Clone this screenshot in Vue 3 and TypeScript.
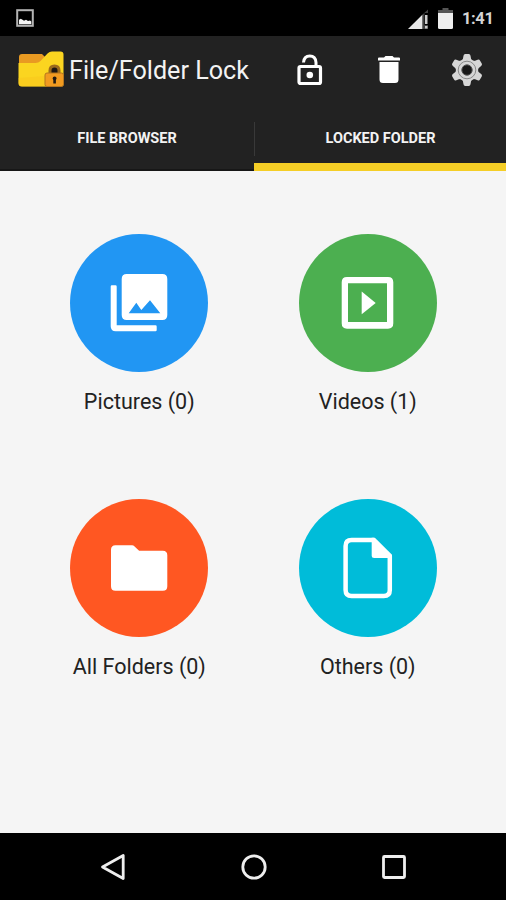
<script setup lang="ts">
interface Category {
  id: 'pictures' | 'videos' | 'folders' | 'others'
  label: string
  count: number
}

const categories: Category[] = [
  { id: 'pictures', label: 'Pictures', count: 0 },
  { id: 'videos', label: 'Videos', count: 1 },
  { id: 'folders', label: 'All Folders', count: 0 },
  { id: 'others', label: 'Others', count: 0 },
]
</script>

<template>
  <div class="screen">
    <div class="status">
      <svg class="shot" viewBox="0 0 18 18">
        <rect x="1.200" y="1.200" width="15.600" height="15.600" fill="none" stroke="#b4b4b4" stroke-width="2" />
        <path d="M3 15.200v-4.500l1.800-1 1.700 1 1.500 1 2-1 2 1.300 2-.5 1.300 1v2.700z" fill="#f4f4f4" />
      </svg>
      <svg class="signal" viewBox="0 0 22 20">
        <path d="M0 20L14.600 5.500V20z" fill="#e8e8e8" />
        <path d="M14.600 5.500L20 .5V4h-3.500v12H20v4h-5.400z" fill="#444" />
        <path d="M17 6h2.500v9H17zM17 17h2.500v2.500H17z" fill="#ccc" />
      </svg>
      <svg class="battery" viewBox="0 0 15 21">
        <path d="M4.500 0h6v2H15v4H0V2h4.500z" fill="#555" />
        <path d="M0 5h15v14.500q0 1.500-1.500 1.500h-12Q0 21 0 19.500z" fill="#eee" />
      </svg>
      <span class="clock">1:41</span>
    </div>

    <header>
      <div class="bar">
        <svg class="logo" viewBox="0 0 48 38">
          <path d="M2 6q0-3 3-3h20l5 5-5 8H2z" fill="#e99a22" />
          <path d="M1.500 12h17q3 0 5-2l7-7.500Q32.500.5 35 .5h8.500q3 0 3 3v28.500q0 3.500-3.500 3.500H5q-3.500 0-3.500-3.500z" fill="#fbd520" />
          <path d="M1.500 27v5q0 3.500 3.500 3.500h24V25z" fill="#f9c51c" opacity=".5" />
          <path d="M33 23v-3.500q0-4.500 4.500-4.500t4.500 4.500V23" fill="#1d1713" stroke="#9a6a1c" stroke-width="3" />
          <rect x="28" y="22" width="18.500" height="13.500" rx="2" fill="#f29b20" stroke="#b5761f" />
          <path d="M35.600 27.500q0-2 2-2t2 2l-.7 1.500v3.500h-2.600V29z" fill="#241b12" />
        </svg>
        <h1>File/Folder Lock</h1>
        <svg class="unlock" viewBox="0 0 26 32">
          <rect x="2" y="12.500" width="21.500" height="17" rx="1.500" fill="none" stroke="#fff" stroke-width="3.200" />
          <path d="M6.500 8.500Q7 2 12.800 2t6.200 6.500V12" fill="none" stroke="#fff" stroke-width="3" />
          <circle cx="12.800" cy="21" r="3.300" fill="#fff" />
        </svg>
        <svg class="trash" viewBox="0 0 22 28">
          <path d="M0 2.500Q0 1.500 1 1.500h5L7.500 0h7L16 1.500h5q1 0 1 1v2H0zM1.500 6h19v17.500q0 3.500-3.500 3.500H5q-3.500 0-3.500-3.500z" fill="#fff" />
        </svg>
        <svg class="gear" viewBox="-16 -17 32 34">
          <g fill="#d6d6d6">
            <circle r="11.200" />
            <path v-for="n in 6" :key="n" d="M-5.500-8.500Q-3.800-10.500-3.500-14.300-3.300-16-1.800-16h3.600Q3.300-16 3.500-14.300 3.800-10.500 5.500-8.500z" :transform="`rotate(${n * 60})`" />
          </g>
          <circle r="8.800" fill="none" stroke="#888" />
          <circle r="5.200" fill="#181818" stroke="#555" />
        </svg>
      </div>
      <nav class="tabs">
        <div class="tab"><span>FILE BROWSER</span></div>
        <div class="tab active"><span>LOCKED FOLDER</span></div>
      </nav>
    </header>

    <main>
      <div v-for="item in categories" :key="item.id" class="category">
        <svg class="disc" :class="item.id" viewBox="0 0 138 138">
          <template v-if="item.id === 'pictures'">
            <path fill-rule="evenodd" d="M56.700 40h35.600q5 0 5 5v36q0 5-5 5H56.700q-5 0-5-5V45q0-5 5-5zM58.700 79.300h31.600L80 66.300 71.300 76l-5-7.300z" />
            <path d="M40.700 52.500q0-1.200 1.200-1.200h3.600q1.200 0 1.200 1.200v38.800h38.800q1.200 0 1.200 1.200v3.600q0 1.200-1.200 1.200H45.700q-5 0-5-5z" />
          </template>
          <template v-else-if="item.id === 'videos'">
            <path fill-rule="evenodd" d="M48 43h41q5.300 0 5.300 5.300v41q0 5.400-5.300 5.400H48q-5.300 0-5.300-5.400v-41Q42.700 43 48 43zm1 6.300V88h39V49.300z" />
            <path d="M62.700 57.500L76.700 69l-14 11.200z" />
          </template>
          <path v-else-if="item.id === 'folders'" d="M45.500 46.300H62q1.500 0 2.600 1.200l4.500 4.200h23.700q4.500 0 4.500 4.500v31q0 4.500-4.500 4.500H45.500Q41 91.700 41 87.200V50.800q0-4.500 4.500-4.500z" />
          <template v-else>
            <path d="M75 40.900H52.600q-6 0-6 6v44.200q0 6 6 6h32.200q6 0 6-6V57" fill="none" stroke="#fff" stroke-width="4.500" />
            <path d="M72.700 38.700h3.200L93 55.800V59H75.200q-2.500 0-2.500-2.500z" />
          </template>
        </svg>
        <p>{{ item.label }} ({{ item.count }})</p>
      </div>
    </main>

    <footer>
      <svg viewBox="0 0 28 28"><path d="M3.500 14L24.200 2.500v23z" /></svg>
      <svg viewBox="0 0 28 28"><circle cx="14" cy="14" r="11.200" /></svg>
      <svg viewBox="0 0 28 28"><rect x="3.500" y="3.500" width="21" height="21" rx="1" /></svg>
    </footer>
  </div>
</template>

<style>
body {
  margin: 0;
}
</style>

<style scoped>
.screen {
  width: 506px;
  height: 900px;
  display: flex;
  flex-direction: column;
  overflow: hidden;
  background: #f5f5f5;
  font-family: Roboto, "Liberation Sans", sans-serif;
}
svg {
  display: block;
  flex: none;
}
.status {
  height: 36px;
  flex: none;
  box-sizing: border-box;
  display: flex;
  align-items: flex-start;
  padding: 8px 11px 0 16px;
  background: #000;
}
.shot {
  width: 18px;
  height: 18px;
  margin-top: 1px;
}
.signal {
  width: 22px;
  height: 20px;
  margin: 1px 8px 0 auto;
}
.battery {
  width: 15px;
  height: 21px;
  margin-right: 9px;
}
.clock {
  width: 33px;
  white-space: nowrap;
  font-size: 16.500px;
  line-height: 22px;
  font-weight: 700;
  letter-spacing: -0.4px;
  color: #d4d4d4;
}
header {
  height: 134.500px;
  flex: none;
  display: flex;
  flex-direction: column;
  background: #222;
  color: #f3f3f3;
}
.bar {
  height: 68px;
  display: flex;
  align-items: center;
  padding-left: 17px;
}
.logo {
  width: 48px;
  height: 38px;
}
h1 {
  width: 181px;
  margin: 2px 47px 0 4px;
  white-space: nowrap;
  font-size: 25.150px;
  line-height: 30px;
  font-weight: 400;
}
.unlock {
  width: 26px;
  height: 32px;
}
.trash {
  width: 22px;
  height: 28px;
  margin-left: 55px;
}
.gear {
  width: 32px;
  height: 34px;
  margin-left: 51px;
}
.tabs {
  height: 66.500px;
  display: flex;
}
.tab {
  width: 254px;
  box-sizing: border-box;
  padding-top: 17.500px;
  border-bottom: 2px solid #171717;
  text-align: center;
  font-size: 14.500px;
  line-height: 34px;
  font-weight: 700;
}
.tab.active {
  width: 252px;
  display: flex;
  justify-content: center;
  border-bottom: 8px solid #f5ce26;
}
.tab.active::before {
  content: "";
  width: 1px;
  height: 34px;
  margin-right: auto;
  background: #393939;
}
.tab.active span {
  margin-right: auto;
}
main {
  height: 662.500px;
  flex: none;
  box-sizing: border-box;
  display: grid;
  grid-template-columns: 228.500px 228.500px;
  grid-template-rows: 265.300px 265.300px;
  padding: 63.500px 24px 0 25px;
}
.category {
  display: flex;
  flex-direction: column;
  align-items: center;
}
.disc {
  width: 138px;
  height: 138px;
  border-radius: 50%;
  fill: #fff;
}
.pictures {
  background: #2196f3;
}
.videos {
  background: #4caf50;
}
.folders {
  background: #ff5722;
}
.others {
  background: #00bcd9;
}
p {
  margin: 15px 0 0;
  font-size: 21.500px;
  line-height: 30px;
  color: #222;
}
footer {
  height: 67px;
  flex: none;
  display: flex;
  align-items: center;
  justify-content: center;
  gap: 112.500px;
  padding-left: 1px;
  background: #000;
}
footer svg {
  width: 28px;
  height: 28px;
  fill: none;
  stroke: #eee;
  stroke-width: 2.800;
  stroke-linejoin: round;
}
</style>
